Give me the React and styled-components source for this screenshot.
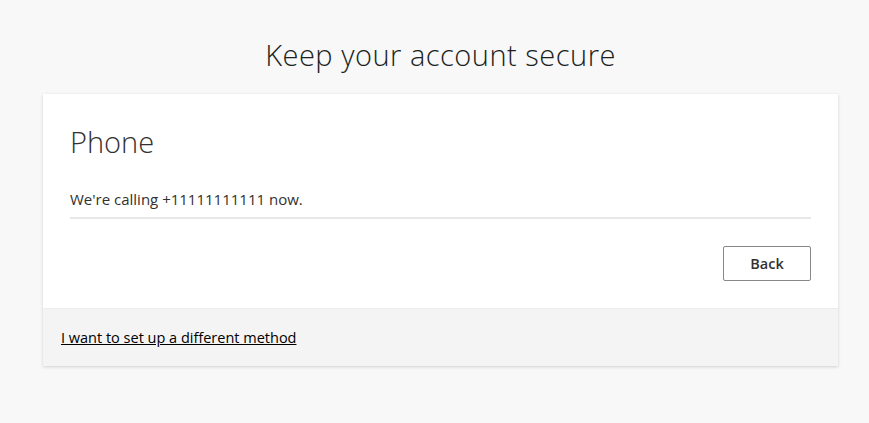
import React from 'react'
import styled, { createGlobalStyle } from 'styled-components'

const GlobalStyle = createGlobalStyle`
  html, body {
    margin: 0;
    padding: 0;
    background: #f8f8f8;
    font-family: 'Open Sans', 'Noto Sans', sans-serif;
    color: #323130;
  }
`

const Page = styled.div`
  width: 869px;
  height: 423px;
  box-sizing: border-box;
  padding: 35px 31px 0 43px;
  display: flex;
  flex-direction: column;
`

const Title = styled.h1`
  margin: 0 0 19px;
  text-align: center;
  font-size: 29px;
  font-weight: 300;
  line-height: 40px;
  letter-spacing: 0.5px;
  color: #201f1e;
`

const Card = styled.div`
  width: 795px;
  background: #fff;
  box-shadow: 0 1px 3px rgba(0, 0, 0, 0.16);
  display: flex;
  flex-direction: column;
`

const Body = styled.div`
  padding: 30px 27px 0;
  height: 214px;
  box-sizing: border-box;
  display: flex;
  flex-direction: column;
`

const Heading = styled.h2`
  margin: 0 0 29px;
  font-size: 29px;
  font-weight: 300;
  line-height: 36px;
  color: #323130;
`

const Message = styled.p`
  margin: 0;
  padding-bottom: 8px;
  font-size: 15px;
  line-height: 20px;
  border-bottom: 2px solid #e8e8e8;
`

const Actions = styled.div`
  display: flex;
  justify-content: flex-end;
  margin-top: 27px;
`

const Button = styled.button`
  width: 88px;
  height: 35px;
  background: #fff;
  border: 1px solid #8a8886;
  border-radius: 2px;
  font-family: inherit;
  font-size: 14.5px;
  font-weight: 600;
  color: #323130;
  cursor: pointer;
`

const Footer = styled.div`
  background: #f4f4f4;
  border-top: 1px solid #ececec;
  height: 58px;
  box-sizing: border-box;
  padding: 0 18px;
  display: flex;
  align-items: center;
`

const Link = styled.a`
  font-size: 14.5px;
  color: #000;
  text-decoration: underline;
  cursor: pointer;
`

export default function App() {
  return (
    <>
      <GlobalStyle />
      <Page>
        <Title>Keep your account secure</Title>
        <Card>
          <Body>
            <Heading>Phone</Heading>
            <Message>We're calling +11111111111 now.</Message>
            <Actions>
              <Button>Back</Button>
            </Actions>
          </Body>
          <Footer>
            <Link>I want to set up a different method</Link>
          </Footer>
        </Card>
      </Page>
    </>
  )
}
